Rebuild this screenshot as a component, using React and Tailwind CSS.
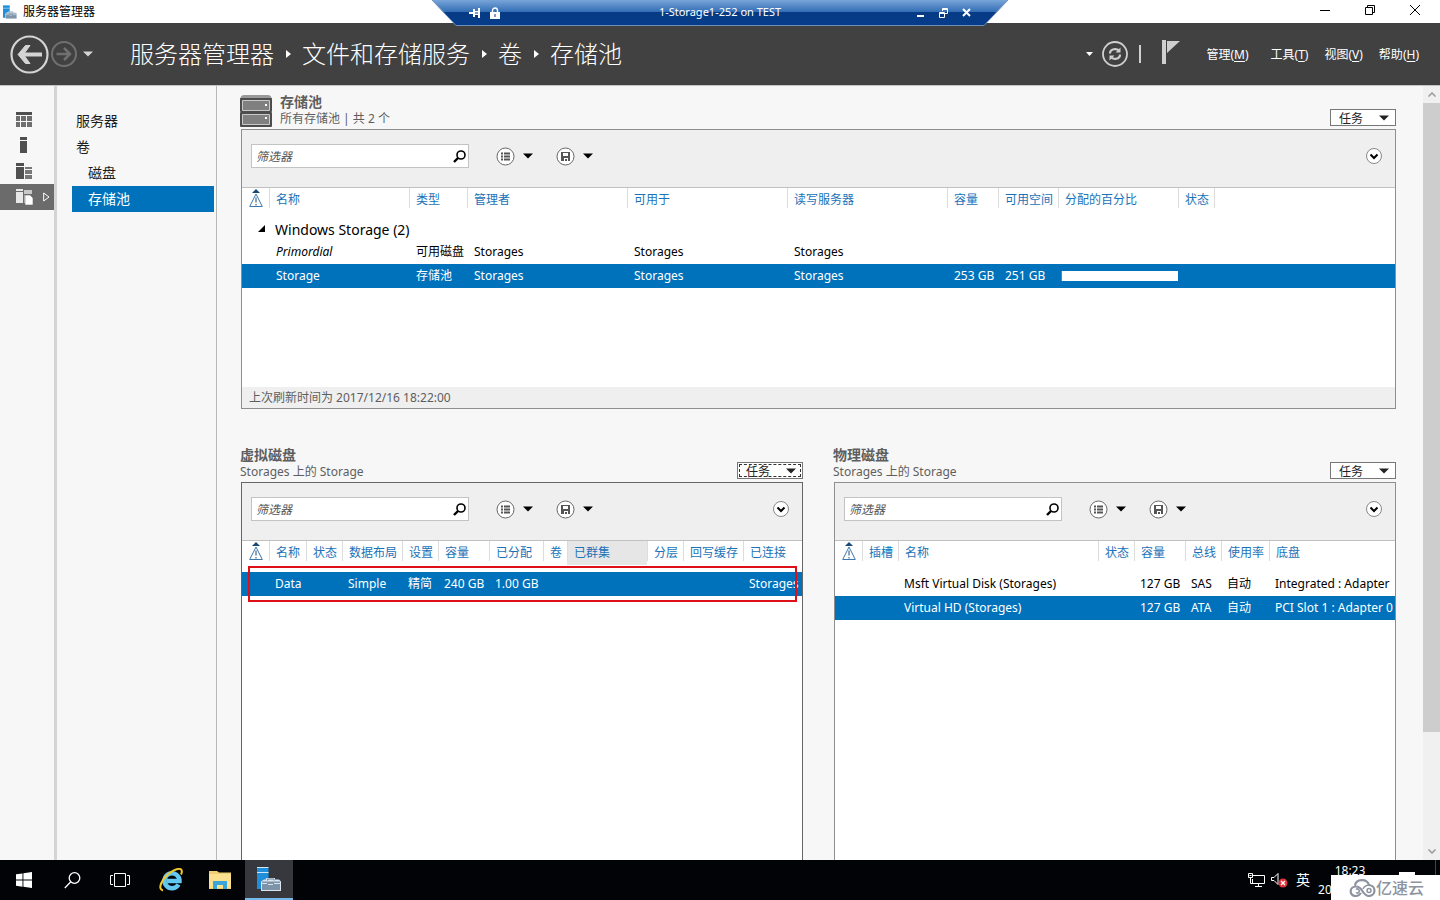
import { Fragment } from "react"
import { clsx } from "clsx"

const crumbs = ["服务器管理器", "文件和存储服务", "卷", "存储池"]

const menus = [
  { label: "管理", key: "M" },
  { label: "工具", key: "T" },
  { label: "视图", key: "V" },
  { label: "帮助", key: "H" },
]

const navItems = [
  { label: "服务器" },
  { label: "卷" },
  { label: "磁盘", nested: true },
  { label: "存储池", nested: true, active: true },
]

const poolColumns = [
  { label: "名称", width: 140 },
  { label: "类型", width: 58 },
  { label: "管理者", width: 160 },
  { label: "可用于", width: 160 },
  { label: "读写服务器", width: 160 },
  { label: "容量", width: 51 },
  { label: "可用空间", width: 60 },
  { label: "分配的百分比", width: 120 },
  { label: "状态", width: 36 },
  { label: "" },
]

const virtualColumns = [
  { label: "名称", width: 37 },
  { label: "状态", width: 36 },
  { label: "数据布局", width: 60 },
  { label: "设置", width: 36 },
  { label: "容量", width: 51 },
  { label: "已分配", width: 54 },
  { label: "卷", width: 24 },
  { label: "已群集", width: 80, hovered: true },
  { label: "分层", width: 36 },
  { label: "回写缓存", width: 60 },
  { label: "已连接" },
]

const physicalColumns = [
  { label: "插槽", width: 36 },
  { label: "名称", width: 200 },
  { label: "状态", width: 36 },
  { label: "容量", width: 51 },
  { label: "总线", width: 36 },
  { label: "使用率", width: 48 },
  { label: "底盘" },
]

const virtualRows = [
  { selected: true, cells: ["Data", "", "Simple", "精简", "240 GB", "1.00 GB", "", "", "", "", "Storages"] },
]

const physicalRows = [
  { cells: ["", "Msft Virtual Disk (Storages)", "", "127 GB", "SAS", "自动", "Integrated : Adapter"] },
  { selected: true, cells: ["", "Virtual HD (Storages)", "", "127 GB", "ATA", "自动", "PCI Slot 1 : Adapter 0"] },
]

const Caret = ({ className }) => (
  <svg width="10" height="6" viewBox="0 0 10 6" className={className} fill="currentColor" aria-hidden="true">
    <path d="M0 0.5h10L5 5.5z" />
  </svg>
)

const ServerManagerIcon = ({ size }) => (
  <svg width={size} height={size} viewBox="0 0 24 24" aria-hidden="true">
    <path d="M0 0h11.500v22H0z" fill="#1e8fd8" />
    <path d="M0 .5h11.500M0 5.500h11.500" stroke="#cfe8f8" />
    <path d="M4 14.500l3-2h2V11h9v1.500h4l2 2V24H4z" fill="#d9e4ee" />
    <path d="M5 14.500h18V23H5z" fill="#7d93a8" />
    <path d="M10.500 13.500v-1.500h6.500v1.500" stroke="#6f879d" fill="none" />
    <path d="M5 16.500h5M11 17.500h5M17 16.500h6" stroke="#d9e4ee" />
  </svg>
)

// Blue connection bar that hangs from the top of a full screen session
const ConnectionBar = () => (
  <div className="absolute left-1/2 top-0 z-10 h-[26px] w-[576px] -translate-x-1/2 text-white">
    <svg width="576" height="26" viewBox="0 0 576 26" className="absolute inset-0" aria-hidden="true">
      <defs>
        <linearGradient id="bar" x1="0" y1="0" x2="0" y2="1">
          <stop offset="0" stopColor="#78a5d8" />
          <stop offset="0.47" stopColor="#326db4" />
          <stop offset="0.48" stopColor="#063a84" />
          <stop offset="1" stopColor="#063c8a" />
        </linearGradient>
      </defs>
      <path d="M0 0h576l-24 25.500H24z" fill="url(#bar)" />
      <path d="M0 0l24 25.500h528L576 0" fill="none" stroke="#6f8fb8" />
    </svg>
    <div className="relative flex h-[25px] items-center pl-[36px] pr-[37px]">
      <button type="button" aria-label="固定" className="flex size-[14px] items-center justify-center">
        <svg width="12" height="10" viewBox="0 0 12 10" fill="#fff">
          <path d="M0 4h4V1h2v2h3V0h2v10H9V7H6v2H4V6H0zM6 4.500v1h3v-1z" fillRule="evenodd" />
        </svg>
      </button>
      <svg width="10" height="12" viewBox="0 0 10 12" className="ml-2" aria-hidden="true">
        <path d="M2.500 5V3.500a2.500 2.500 0 015 0V5" stroke="#fff" strokeWidth="1.4" fill="none" />
        <path d="M0 5h10v7H0z" fill="#fff" />
        <path d="M4.500 7h1v3h-1z" fill="#063a84" />
      </svg>
      <span className="flex-1 pl-6 text-center text-[11px]">1-Storage1-252 on TEST</span>
      <div className="flex items-center gap-[14px]">
        <button type="button" aria-label="最小化">
          <svg width="9" height="10" viewBox="0 0 9 10"><path d="M1 7h7v2H1z" fill="#fff" /></svg>
        </button>
        <button type="button" aria-label="还原">
          <svg width="9" height="10" viewBox="0 0 9 10" stroke="#fff" fill="none">
            <path d="M3.500 3V.5h5v5H6M3 1.500h6" />
            <path d="M.5 4.500h5v5h-5zM0 5.500h6" />
          </svg>
        </button>
        <button type="button" aria-label="关闭">
          <svg width="9" height="10" viewBox="0 0 9 10" stroke="#fff" strokeWidth="2"><path d="M1 1l7 7M8 1L1 8" /></svg>
        </button>
      </div>
    </div>
  </div>
)

const TitleBar = () => (
  <div className="flex h-[23px] shrink-0 items-center bg-white pl-[3px] text-xs text-black">
    <ServerManagerIcon size={14} />
    <span className="ml-[6px] flex-1">服务器管理器</span>
    <div className="flex h-full items-center pr-[3px] pb-[3px]">
      <button type="button" aria-label="最小化" className="flex w-[45px] justify-center">
        <svg width="10" height="10" viewBox="0 0 10 10" stroke="#000"><path d="M0 5.500h10" /></svg>
      </button>
      <button type="button" aria-label="还原" className="flex w-[45px] justify-center">
        <svg width="10" height="10" viewBox="0 0 10 10" stroke="#000" fill="none">
          <path d="M.5 2.500h7v7h-7zM2.500 2V.5h7v7H8" />
        </svg>
      </button>
      <button type="button" aria-label="关闭" className="flex w-[45px] justify-center">
        <svg width="10" height="10" viewBox="0 0 10 10" stroke="#000"><path d="M0 0l10 10M10 0L0 10" /></svg>
      </button>
    </div>
  </div>
)

const Header = () => (
  <header className="flex h-[63px] shrink-0 items-center border-b border-[#c4c4c4] bg-[#414141] pl-[10px] pr-[21px] text-white">
    <button type="button" aria-label="后退">
      <svg width="39" height="39" viewBox="0 0 39 39" fill="none" stroke="#d4d4d4">
        <circle cx="19.500" cy="19.500" r="18" strokeWidth="2.200" />
        <path d="M32 19.500H11" strokeWidth="4" />
        <path d="M20 10.500h-4.500L8 19.500l7.500 9H20l-6.500-9z" fill="#d4d4d4" strokeWidth="1" />
      </svg>
    </button>
    <button type="button" aria-label="前进" className="ml-[2px]">
      <svg width="26" height="26" viewBox="0 0 26 26" fill="none" stroke="#707070">
        <circle cx="13" cy="13" r="12" strokeWidth="2" />
        <path d="M5.500 13H18M13 7l6 6-6 6" strokeWidth="2.500" />
      </svg>
    </button>
    <button type="button" aria-label="历史记录" className="ml-[6px]">
      <Caret className="text-[#d4d4d4]" />
    </button>
    <nav className="ml-[37px] flex flex-1 items-center whitespace-nowrap text-2xl font-light">
      {crumbs.map((crumb, i) => (
        <Fragment key={crumb}>
          {i > 0 && (
            <svg width="28" height="8" viewBox="0 0 28 8" fill="#fff" aria-hidden="true">
              <path d="M12 0l5 4-5 4z" />
            </svg>
          )}
          <a href="#">{crumb}</a>
        </Fragment>
      ))}
    </nav>
    <svg width="7" height="4" viewBox="0 0 7 4" fill="#fff" aria-hidden="true"><path d="M0 0h7L3.500 4z" /></svg>
    <button type="button" aria-label="刷新" className="ml-[9px]">
      <svg width="26" height="26" viewBox="0 0 26 26" fill="none" stroke="#cfcfcf">
        <circle cx="13" cy="13" r="12" strokeWidth="1.800" />
        <path d="M8 12.500c0-5 7-5.500 9-2.500M18 13.500c0 5-7 5.500-9 2.500" strokeWidth="2.200" />
        <path d="M18.500 6.500v5h-5zM7.500 19.500v-5h5z" fill="#cfcfcf" stroke="none" />
      </svg>
    </button>
    <span className="ml-[11px] h-[18px] w-[2px] bg-[#cfcfcf]" />
    <button type="button" aria-label="通知" className="ml-[21px] mb-1">
      <svg width="18" height="24" viewBox="0 0 18 24" fill="#cfcfcf">
        <path d="M0 0h4v24H0zM5 1h13L5 13z" />
      </svg>
    </button>
    <div className="ml-[26px] flex gap-4 pt-0.5 text-xs">
      {menus.map((menu, i) => (
        <button key={menu.key} type="button" className={clsx("whitespace-nowrap", i === 0 && "mr-[6px]")}>
          {menu.label}(<u className="underline-offset-2">{menu.key}</u>)
        </button>
      ))}
    </div>
  </header>
)

const IconRail = () => (
  <div className="flex w-[57px] shrink-0 flex-col border-r-[3px] border-[#d4d4d4] pt-[20px]">
    <button type="button" aria-label="仪表板" className="flex h-[26px] items-center pl-4">
      <svg width="16" height="15" viewBox="0 0 16 15">
        <path d="M0 0h16v3H0z" fill="#505050" />
        <path d="M0 4h4v5H0zM0 10h4v5H0zM5 4h5v5H5zM5 10h5v5H5zM11 4h5v5h-5zM11 10h5v5h-5z" fill="#6e6e6e" />
      </svg>
    </button>
    <button type="button" aria-label="本地服务器" className="flex h-[26px] items-center pl-5">
      <svg width="7" height="16" viewBox="0 0 7 16" fill="#505050"><path d="M0 0h7v3H0zM0 4h7v12H0z" /></svg>
    </button>
    <button type="button" aria-label="所有服务器" className="flex h-[26px] items-center pl-4">
      <svg width="16" height="16" viewBox="0 0 16 16">
        <path d="M0 0h8v3H0zM0 4h8v12H0z" fill="#505050" />
        <path d="M9 4h7v2H9zM9 7h7v4H9zM9 12h7v4H9z" fill="#777" />
      </svg>
    </button>
    <button type="button" aria-label="文件和存储服务" className="flex h-[26px] items-center bg-[#6b6b6b] pl-4">
      <svg width="17" height="16" viewBox="0 0 17 16">
        <path d="M0 0h7v2H0zM0 3h7v11H0z" fill="#e8e8e8" />
        <path d="M8 1h8v4H8zM8 6h2v8H8z" fill="#c9c9c9" />
        <path d="M9 6h5l3 3v7H9z" fill="#fff" stroke="#6b6b6b" strokeWidth=".6" />
      </svg>
      <svg width="7" height="10" viewBox="0 0 7 10" fill="none" stroke="#fff" className="ml-[10px]">
        <path d="M.7 1v8L6 5z" />
      </svg>
    </button>
  </div>
)

const SideNav = () => (
  <nav className="w-[160px] shrink-0 border-r border-[#b8b8b8] pl-[15px] pr-[2px] pt-[22px] text-sm text-[#1e1e1e]">
    {navItems.map((item) => (
      <a
        key={item.label}
        href="#"
        className={clsx(
          "flex h-[26px] items-center",
          item.nested ? "pl-4" : "pl-1",
          item.active && "bg-[#0072bc] text-white"
        )}
      >
        {item.label}
      </a>
    ))}
  </nav>
)

const PanelHeader = ({ title, subtitle, icon, focused }) => (
  <div className="flex h-[35px] justify-between text-[#5e5e5e]">
    <div className="-ml-px flex items-start gap-2">
      {icon}
      <div>
        <h2 className="text-sm leading-4 font-bold">{title}</h2>
        <p className="pt-px text-xs leading-4">{subtitle}</p>
      </div>
    </div>
    <button type="button" className="mb-[3px] h-[17px] w-[66px] self-end border border-[#777] bg-white p-px text-xs text-[#222]">
      <span
        className={clsx(
          "flex h-full items-center justify-between pl-[7px] pr-[5px] leading-none",
          focused && "outline-1 outline-dashed outline-[#333] -outline-offset-1"
        )}
      >
        <span className="pt-0.5">任务</span>
        <Caret />
      </span>
    </button>
  </div>
)

const PoolIcon = () => (
  <svg width="32" height="32" viewBox="0 0 32 32" className="mt-px" aria-hidden="true">
    <path d="M4 0h24q3 0 4 4H0q1-4 4-4z" fill="#999" />
    <rect y="3" width="32" height="14" rx="1" fill="#4d4d4d" />
    <rect y="17" width="32" height="15" rx="1" fill="#4d4d4d" />
    <path d="M2.500 5.500h27v10h-27zM2.500 19.500h27v10h-27z" fill="#808080" stroke="#c8c8c8" />
    <path d="M25 9h2v2h-2zM25 22h2v2h-2z" fill="#fff" />
  </svg>
)

const Toolbar = ({ name }) => (
  <div className="flex h-[58px] items-start border-b border-[#c0c0c0] bg-[#efefef] pl-[9px] pr-[13px] pt-[14px]">
    <div className="flex h-6 w-[218px] items-center border border-[#c3c3c3] bg-white pl-1 pr-[2px]">
      <input
        type="text"
        aria-label={`${name}筛选器`}
        placeholder="筛选器"
        className="min-w-0 flex-1 bg-transparent pt-0.5 text-xs italic outline-none placeholder:text-[#555]"
      />
      <button type="button" aria-label="搜索">
        <svg width="13" height="13" viewBox="0 0 13 13" fill="none" stroke="#000">
          <circle cx="8" cy="5" r="4" strokeWidth="1.600" />
          <path d="M5 8L1 12" strokeWidth="2.400" />
        </svg>
      </button>
    </div>
    <div className="ml-[27px] flex h-6 items-center">
      <button type="button" aria-label="分组" className="flex w-[60px] items-center gap-[8px]">
        <svg width="19" height="19" viewBox="0 0 19 19" fill="none" stroke="#666">
          <circle cx="9.500" cy="9.500" r="8.500" fill="#fff" />
          <path d="M5 6.500h2M8 6.500h6M5 9.500h2M8 9.500h6M5 12.500h2M8 12.500h6" strokeWidth="1.800" stroke="#555" />
        </svg>
        <Caret className="text-black" />
      </button>
      <button type="button" aria-label="保存查询" className="flex w-[60px] items-center gap-[8px]">
        <svg width="19" height="19" viewBox="0 0 19 19" fill="none" stroke="#666">
          <circle cx="9.500" cy="9.500" r="8.500" fill="#fff" />
          <path d="M5 5h9v9h-2v-3H8v3H5zM7 6v3h5V6z" fill="#555" fillRule="evenodd" stroke="none" />
          <path d="M9 12h2v2H9z" fill="#555" stroke="none" />
        </svg>
        <Caret className="text-black" />
      </button>
    </div>
    <button type="button" aria-label="展开" className="ml-auto mt-1">
      <svg width="16" height="16" viewBox="0 0 16 16" fill="none" stroke="#888">
        <circle cx="8" cy="8" r="7.500" fill="#fff" />
        <path d="M4.500 6.500L8 10l3.500-3.500" stroke="#000" strokeWidth="2" />
      </svg>
    </button>
  </div>
)

const GridHead = ({ columns }) => (
  <>
    <colgroup>
      <col style={{ width: 27 }} />
      {columns.map((col, i) => (
        <col key={i} style={col.width ? { width: col.width } : undefined} />
      ))}
    </colgroup>
    <thead>
      <tr className="h-6 text-[#1a72b8]">
        <th className="p-0 pt-px align-top">
          <svg width="14" height="18" viewBox="0 0 14 18" className="mx-auto" role="img" aria-label="警告">
            <path d="M3 4L7 0l4 4z" fill="#174a78" />
            <path d="M7 5l6.300 12.500H.7z" fill="#fff" stroke="#3b78ad" />
            <path d="M7 8.500v5M7 15v1.500" stroke="#174a78" />
          </svg>
        </th>
        {columns.map((col, i) => (
          <th
            key={i}
            className={clsx(
              "whitespace-nowrap p-0 text-left align-top font-normal",
              col.hovered && "bg-[#e6e6e6]"
            )}
          >
            <div className="h-5 border-l border-[#dcdcdc] pl-1.5 pt-0.5 leading-5">{col.label}</div>
          </th>
        ))}
      </tr>
    </thead>
  </>
)

const GridRow = ({ cells, selected, firstClassName, cellClassName = "pl-1.5" }) => (
  <tr className={clsx("h-6", selected ? "bg-[#0072bc] text-white" : "text-black")}>
    <td className="p-0" />
    {cells.map((cell, i) => (
      <td key={i} className={clsx("whitespace-nowrap py-0 pr-0", cellClassName, i === 0 && firstClassName)}>{cell}</td>
    ))}
  </tr>
)

const DiskGrid = ({ columns, rows }) => (
  <div className="overflow-hidden">
    <table className="w-full table-fixed border-collapse text-xs">
      <GridHead columns={columns} />
      <tbody>
        <tr className="h-[7px]"><td className="p-0" colSpan={columns.length + 1} /></tr>
        {rows.map((row) => (
          <GridRow key={row.cells.join()} {...row} />
        ))}
      </tbody>
    </table>
  </div>
)

const PoolPanel = () => (
  <section>
    <PanelHeader title="存储池" subtitle="所有存储池 | 共 2 个" icon={<PoolIcon />} />
    <div className="flex h-[280px] flex-col border border-[#8e8e8e] bg-white">
      <Toolbar name="存储池" />
      <div className="flex-1">
        <table className="w-full table-fixed border-collapse text-xs">
          <GridHead columns={poolColumns} />
          <tbody>
            <tr className="h-7 text-black">
              <td className="p-0 pt-1">
                <svg width="7" height="7" viewBox="0 0 7 7" className="ml-auto mr-1" aria-hidden="true">
                  <path d="M7 0v7H0z" />
                </svg>
              </td>
              <td className="whitespace-nowrap p-0 pl-1.5 pt-2 text-sm" colSpan={10}>Windows Storage (2)</td>
            </tr>
            <GridRow
              cells={["Primordial", "可用磁盘", "Storages", "Storages", "Storages", "", "", "", "", ""]}
              firstClassName="italic"
              cellClassName="pl-[7px]"
            />
            <GridRow
              selected
              cellClassName="pl-[7px]"
              cells={[
                "Storage",
                "存储池",
                "Storages",
                "Storages",
                "Storages",
                "253 GB",
                "251 GB",
                <div key="used" className="-ml-1 h-[10px] border-l border-[#3aa655] bg-white" />,
                "",
                "",
              ]}
            />
          </tbody>
        </table>
      </div>
      <div className="h-[21px] bg-[#efefef] pl-[7px] text-xs leading-[22px] text-[#5e5e5e]">上次刷新时间为 2017/12/16 18:22:00</div>
    </div>
  </section>
)

const VirtualDiskPanel = () => (
  <section className="flex min-w-0 flex-col">
    <PanelHeader title="虚拟磁盘" subtitle="Storages 上的 Storage" focused />
    <div className="relative flex-1 border border-b-0 border-[#666] bg-white">
      <Toolbar name="虚拟磁盘" />
      <DiskGrid columns={virtualColumns} rows={virtualRows} />
      <div className="pointer-events-none absolute left-[6px] right-[5px] top-[83px] h-[36px] border-2 border-[#dd1018]" />
    </div>
  </section>
)

const PhysicalDiskPanel = () => (
  <section className="flex min-w-0 flex-col">
    <PanelHeader title="物理磁盘" subtitle="Storages 上的 Storage" />
    <div className="flex-1 border border-b-0 border-[#8e8e8e] bg-white">
      <Toolbar name="物理磁盘" />
      <DiskGrid columns={physicalColumns} rows={physicalRows} />
    </div>
  </section>
)

const ScrollBar = () => (
  <div className="flex w-[17px] shrink-0 flex-col items-center bg-[#f0f0f0]" aria-hidden="true">
    <div className="flex h-[17px] items-center">
      <svg width="8" height="5" viewBox="0 0 8 5" fill="none" stroke="#999" strokeWidth="1.500"><path d="M.5 4.500L4 1l3.500 3.500" /></svg>
    </div>
    <div className="flex w-full flex-1 flex-col">
      <div className="h-[85%] bg-[#cdcdcd]" />
    </div>
    <div className="flex h-[17px] items-center">
      <svg width="8" height="5" viewBox="0 0 8 5" fill="none" stroke="#999" strokeWidth="1.500"><path d="M.5 .5L4 4 7.500 .5" /></svg>
    </div>
  </div>
)

const TaskButton = ({ label, active, children }) => (
  <button
    type="button"
    aria-label={label}
    className={clsx(
      "flex h-full w-12 items-center justify-center",
      active && "border-b-2 border-[#76b9ed] bg-[#36383d]"
    )}
  >
    {children}
  </button>
)

const Taskbar = () => (
  <footer className="relative flex h-10 shrink-0 items-center bg-[#010306] text-white">
    <TaskButton label="开始">
      <svg width="16" height="16" viewBox="0 0 16 16" fill="#fff">
        <path d="M0 2.300l6.500-.9v6.200H0zM7.400 1.200L16 0v7.600H7.400zM0 8.500h6.500v6.200L0 13.800zM7.400 8.500H16V16l-8.600-1.200z" />
      </svg>
    </TaskButton>
    <TaskButton label="搜索">
      <svg width="17" height="17" viewBox="0 0 17 17" fill="none" stroke="#fff" strokeWidth="1.300">
        <circle cx="10.500" cy="6" r="5.300" />
        <path d="M6.600 10L.8 16" />
      </svg>
    </TaskButton>
    <TaskButton label="任务视图">
      <svg width="20" height="14" viewBox="0 0 20 14" fill="none" stroke="#fff">
        <path d="M4.500 .5h11v13h-11zM3 2.500H.5v9H3M17 2.500h2.500v9H17" />
      </svg>
    </TaskButton>
    <div className="ml-[3px] flex h-full gap-px">
      <TaskButton label="Internet Explorer">
        <svg width="24" height="24" viewBox="0 0 24 24" fill="none">
          <path d="M19.500 16.500A7.500 7.500 0 1 1 20.500 13H8" stroke="#62c8f2" strokeWidth="4.500" />
          <path d="M4 22.500C-2 21 3 11 10 5.500 15 1.500 21-.5 22.500 2c.8 1.300.2 3-.5 4.500" stroke="#f4c72c" strokeWidth="2" />
        </svg>
      </TaskButton>
      <TaskButton label="文件资源管理器">
        <svg width="22" height="18" viewBox="0 0 22 18">
          <path d="M0 0h8l2 1.500h12V18H0z" fill="#f0cf72" />
          <path d="M0 3h22v14H0z" fill="#fbe08f" />
          <path d="M4 10h14v8h-4v-4H8v4H4z" fill="#3aa5d8" />
        </svg>
      </TaskButton>
      <TaskButton label="服务器管理器" active>
        <ServerManagerIcon size={24} />
      </TaskButton>
    </div>
    <div className="ml-auto flex h-full items-center">
      <svg width="17" height="14" viewBox="0 0 17 14" fill="none" stroke="#fff" role="img" aria-label="网络">
        <path d="M5 2.500h11.500v8H4.500V6M7 13.500h7M10.500 10.500v3M.5 .5h4v4h-4zM2.500 4.500v6H5M1.500 2.500h2" />
      </svg>
      <svg width="17" height="16" viewBox="0 0 17 16" fill="none" className="ml-[6px]" role="img" aria-label="已静音">
        <path d="M.5 5.500H3l4-4v11l-4-4H.5z" stroke="#fff" />
        <circle cx="12" cy="11" r="4.500" fill="#e0323c" />
        <path d="M10 9l4 4M14 9l-4 4" stroke="#fff" strokeWidth="1.300" />
      </svg>
      <span className="ml-2 text-sm">英</span>
      <div className="ml-1 w-[72px] text-center text-xs leading-[19px]">
        <div>18:23</div>
        <div>2017/12/16</div>
      </div>
      <svg width="16" height="16" viewBox="0 0 16 16" fill="#fff" className="ml-[13px]" aria-hidden="true">
        <path d="M0 0h16v12H9l-3 4v-4H0z" />
      </svg>
      <span className="ml-5 mr-1 h-full w-px bg-[#444]" />
    </div>
    <div className="absolute bottom-0 right-0 flex h-[25px] w-[109px] items-center bg-white pl-[18px] text-[#8d93a0]">
      <svg width="27" height="18" viewBox="0 0 27 18" fill="none" stroke="currentColor" strokeWidth="2.200" aria-hidden="true">
        <path d="M6 6.500C7 -.5 18 -.5 20 6c7 .5 7.500 10.500 0 11-3.500 0-5.500-3-7-5.500s-3.500-4-6-4C0 7.500 0 17 6.500 17c3 0 4.500-1.500 5.500-3" />
        <path d="M14 10c1-2 3-3.800 6-4M20 13.500a2 2 0 100-4 2 2 0 000 4M7 13.500a2 2 0 100-3" strokeWidth="1.500" />
      </svg>
      <span className="text-base font-medium leading-none">亿速云</span>
    </div>
  </footer>
)

const App = () => (
  <div className="relative flex h-screen flex-col overflow-hidden bg-[#f7f7f7] font-['Noto_Sans','Noto_Sans_CJK_SC',sans-serif]">
    <ConnectionBar />
    <TitleBar />
    <Header />
    <div className="flex min-h-0 flex-1">
      <IconRail />
      <SideNav />
      <main className="flex min-w-0 flex-1 flex-col overflow-hidden pl-6 pr-[27px] pt-2">
        <PoolPanel />
        <div className="mt-[38px] grid min-h-0 flex-1 grid-cols-2 gap-[31px]">
          <VirtualDiskPanel />
          <PhysicalDiskPanel />
        </div>
      </main>
      <ScrollBar />
    </div>
    <Taskbar />
  </div>
)

export default App
